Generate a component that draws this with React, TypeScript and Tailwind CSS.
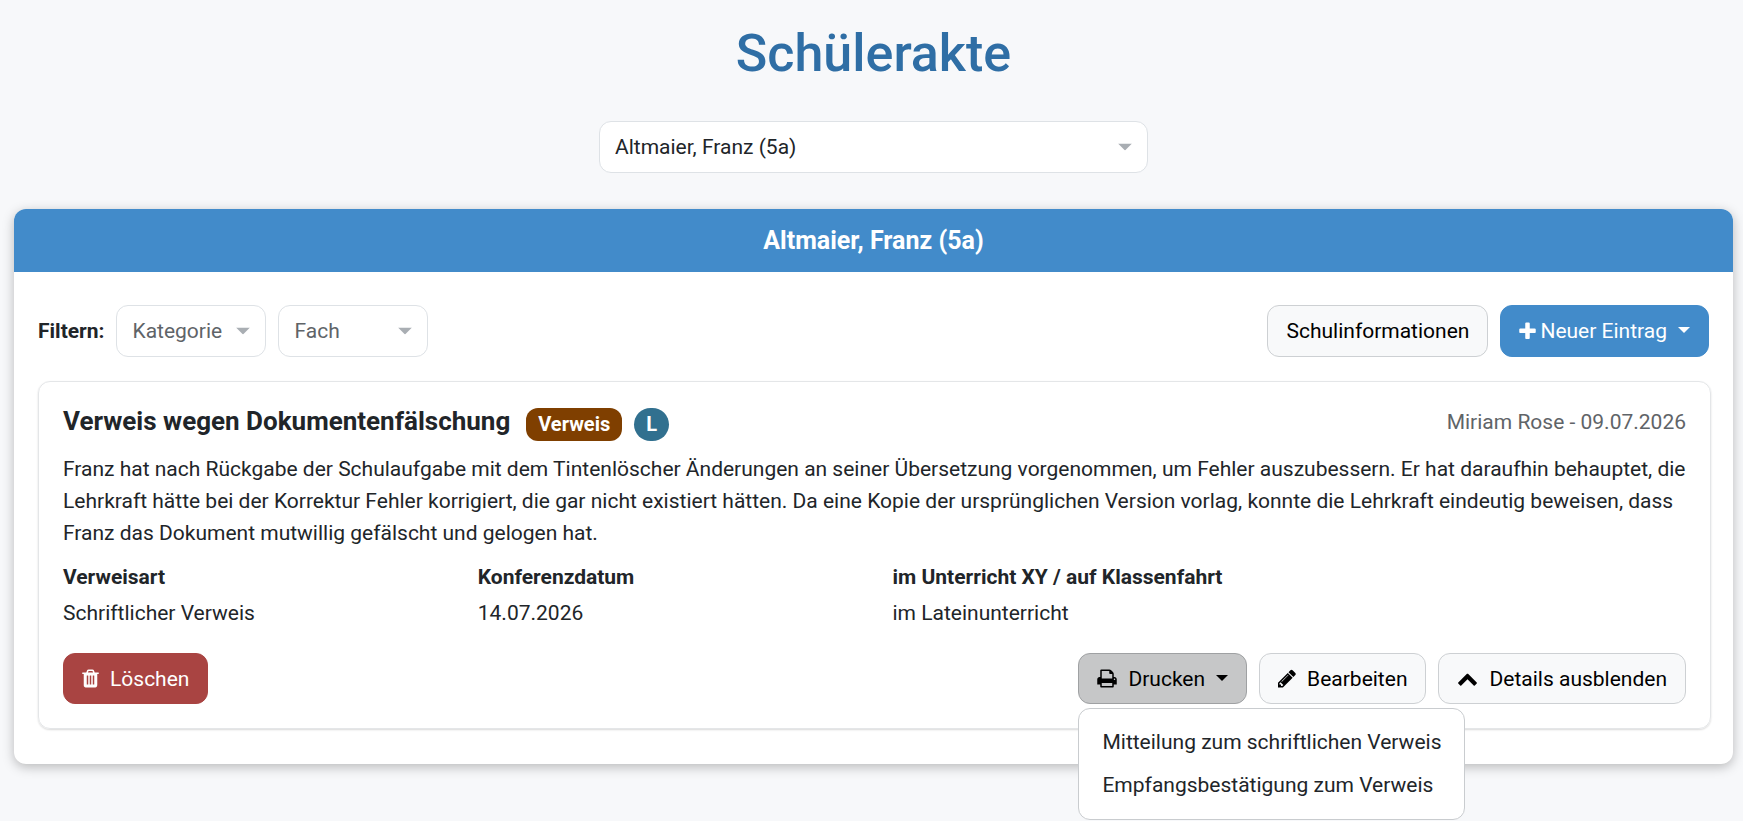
import { useState } from "react";
import type { ReactNode } from "react";
import clsx from "clsx";

const icons = {
  plus: {
    box: "192 0 1408 1792",
    size: "w-[17px]",
    path: "M1600 736v192q0 40-28 68t-68 28h-416v416q0 40-28 68t-68 28h-192q-40 0-68-28t-28-68v-416h-416q-40 0-68-28t-28-68v-192q0-40 28-68t68-28h416v-416q0-40 28-68t68-28h192q40 0 68 28t28 68v416h416q40 0 68 28t28 68z",
  },
  trash: {
    box: "192 0 1408 1792",
    size: "w-[17px]",
    path: "M704 1376v-704q0-14-9-23t-23-9h-64q-14 0-23 9t-9 23v704q0 14 9 23t23 9h64q14 0 23-9t9-23zm256 0v-704q0-14-9-23t-23-9h-64q-14 0-23 9t-9 23v704q0 14 9 23t23 9h64q14 0 23-9t9-23zm256 0v-704q0-14-9-23t-23-9h-64q-14 0-23 9t-9 23v704q0 14 9 23t23 9h64q14 0 23-9t9-23zm-544-992h448l-48-117q-7-9-17-11h-317q-10 2-17 11zm928 32v64q0 14-9 23t-23 9h-96v948q0 83-47 143.5t-113 60.5h-832q-66 0-113-58.5t-47-141.5v-952h-96q-14 0-23-9t-9-23v-64q0-14 9-23t23-9h309l70-167q15-37 54-63t79-26h320q40 0 79 26t54 63l70 167h309q14 0 23 9t9 23z",
  },
  print: {
    box: "64 0 1664 1792",
    size: "w-5",
    path: "M448 1536h896v-256h-896v256zm0-640h896v-384h-160q-40 0-68-28t-28-68v-160h-640v640zm1152 64q0-26-19-45t-45-19-45 19-19 45 19 45 45 19 45-19 19-45zm128 0v416q0 13-9.5 22.5t-22.5 9.5h-224v160q0 40-28 68t-68 28h-960q-40 0-68-28t-28-68v-160h-224q-13 0-22.5-9.5t-9.5-22.5v-416q0-79 56.5-135.5t135.5-56.5h64v-544q0-40 28-68t68-28h672q40 0 88 20t76 48l152 152q28 28 48 76t20 88v256h64q79 0 135.5 56.5t56.5 135.5z",
  },
  pencil: {
    box: "128 0 1536 1792",
    size: "w-[18px]",
    path: "M491 1536l91-91-235-235-91 91v107h128v128h107zm523-928q0-22-22-22-10 0-17 7l-542 542q-7 7-7 17 0 22 22 22 10 0 17-7l542-542q7-7 7-17zm-54-192l416 416-832 832h-416v-416zm683 96q0 53-37 90l-166 166-416-416 166-165q36-38 90-38 53 0 91 38l235 234q37 39 37 91z",
  },
  chevronUp: {
    box: "0 0 1792 1792",
    size: "w-[21px]",
    path: "M1683 1331l-166 165q-19 19-45 19t-45-19l-531-531-531 531q-19 19-45 19t-45-19l-166-165q-19-19-19-45.5t19-45.5l742-741q19-19 45-19t45 19l742 741q19 19 19 45.5t-19 45.5z",
  },
};

function Icon({ name }: { name: keyof typeof icons }) {
  const { box, size, path } = icons[name];
  return (
    <svg viewBox={box} className={clsx("h-[21px] shrink-0 fill-current", size)} aria-hidden="true">
      <path d={path} />
    </svg>
  );
}

function Caret({ className = "w-3 h-[6px] mb-[2px]" }: { className?: string }) {
  return (
    <svg viewBox="0 0 12 6" className={clsx("shrink-0 fill-current", className)} aria-hidden="true">
      <path d="M0 0h12L6 6z" />
    </svg>
  );
}

const variants = {
  light: "bg-[#f8f9fa] border-[#cdd0d3] text-black",
  active: "bg-[#c6c7c8] border-[#9fa1a3] text-black",
  primary: "bg-[#428bca] border-[#428bca] text-white",
  danger: "bg-[#a94442] border-[#a94442] text-white",
};

interface ButtonProps {
  variant?: keyof typeof variants;
  className?: string;
  onClick?: () => void;
  expanded?: boolean;
  children: ReactNode;
}

function Button({ variant = "light", className = "h-[51px]", onClick, expanded, children }: ButtonProps) {
  return (
    <button
      type="button"
      onClick={onClick}
      aria-expanded={expanded}
      className={clsx(
        "flex items-center gap-[11px] px-[18px] border rounded-xl whitespace-nowrap",
        variants[variant],
        className
      )}
    >
      {children}
    </button>
  );
}

interface SelectProps {
  label: string;
  options: string[];
  className?: string;
}

function Select({ label, options, className }: SelectProps) {
  return (
    <div className={clsx("relative", className)}>
      <select
        aria-label={label}
        className="appearance-none w-full h-[52px] pl-[15px] pr-10 bg-white border border-[#dee2e6] rounded-xl"
      >
        {options.map((option) => (
          <option key={option}>{option}</option>
        ))}
      </select>
      <Caret className="w-[14px] h-[7px] absolute right-4 top-1/2 -translate-y-1/2 text-[#a9aeb3] pointer-events-none" />
    </div>
  );
}

const details = [
  { label: "Verweisart", value: "Schriftlicher Verweis" },
  { label: "Konferenzdatum", value: "14.07.2026" },
  { label: "im Unterricht XY / auf Klassenfahrt", value: "im Lateinunterricht" },
];

const printItems = ["Mitteilung zum schriftlichen Verweis", "Empfangsbestätigung zum Verweis"];

function PrintMenu() {
  const [open, setOpen] = useState(true);

  return (
    <div className="relative">
      <Button variant={open ? "active" : "light"} expanded={open} onClick={() => setOpen(!open)}>
        <Icon name="print" />
        Drucken
        <Caret />
      </Button>
      {open && (
        <ul className="absolute left-0 top-full mt-1 py-3 bg-white border border-[#c9cccf] rounded-xl whitespace-nowrap">
          {printItems.map((item) => (
            <li key={item}>
              <a href="#" className="block px-[23px] py-[6px] leading-[31px]">
                {item}
              </a>
            </li>
          ))}
        </ul>
      )}
    </div>
  );
}

function Badge({ className, children }: { className: string; children: ReactNode }) {
  return (
    <span className={clsx("px-3 py-1 text-white text-xl leading-[25px] font-bold", className)}>{children}</span>
  );
}

function Entry() {
  return (
    <article className="mt-6 -mr-[2px] p-6 border border-[#e4e6e8] rounded-xl shadow-[0_1px_2px_rgba(0,0,0,0.15)]">
      <header className="flex items-start justify-between">
        <div className="flex items-start gap-4">
          <h3 className="text-[26px] leading-[30px] font-bold">Verweis wegen Dokumentenfälschung</h3>
          <div className="flex gap-3 pt-[2px]">
            <Badge className="bg-[#7f3f00] rounded-xl">Verweis</Badge>
            <Badge className="bg-[#31708f] rounded-full">L</Badge>
          </div>
        </div>
        <span className="text-[#5f6468]">Miriam Rose - 09.07.2026</span>
      </header>

      <p className="mt-3">
        Franz hat nach Rückgabe der Schulaufgabe mit dem Tintenlöscher Änderungen an seiner Übersetzung vorgenommen, um
        Fehler auszubessern. Er hat daraufhin behauptet, die Lehrkraft hätte bei der Korrektur Fehler korrigiert, die gar
        nicht existiert hätten. Da eine Kopie der ursprünglichen Version vorlag, konnte die Lehrkraft eindeutig beweisen,
        dass Franz das Dokument mutwillig gefälscht und gelogen hat.
      </p>

      <dl className="grid grid-cols-4 gap-x-9 mt-3">
        {details.map((detail) => (
          <div key={detail.label}>
            <dt className="font-bold">{detail.label}</dt>
            <dd className="mt-1">{detail.value}</dd>
          </div>
        ))}
      </dl>

      <footer className="flex justify-between mt-6">
        <Button variant="danger">
          <Icon name="trash" />
          Löschen
        </Button>
        <div className="flex gap-3">
          <PrintMenu />
          <Button>
            <Icon name="pencil" />
            Bearbeiten
          </Button>
          <Button>
            <Icon name="chevronUp" />
            Details ausblenden
          </Button>
        </div>
      </footer>
    </article>
  );
}

export default function App() {
  return (
    <div className="min-h-screen bg-[#f7f8fa] pl-[14px] pr-[10px] pt-[22px] font-[Roboto,sans-serif] text-[21px] leading-8 text-[#212529]">
      <h1 className="text-center text-[52px] leading-[64px] font-medium text-[#2f6ea5]">Schülerakte</h1>

      <div className="w-1/3 mx-auto px-3 mt-[35px]">
        <Select label="Schüler" options={["Altmaier, Franz (5a)"]} />
      </div>

      <main className="mt-9 bg-white rounded-xl shadow-[0_3px_12px_rgba(0,0,0,0.26)]">
        <h2 className="py-4 bg-[#428bca] rounded-t-xl text-center text-[25px] leading-[31px] font-bold text-white">
          Altmaier, Franz (5a)
        </h2>
        <div className="px-6 pt-[33px] pb-[35px]">
          <div className="flex items-center justify-between">
            <div className="flex items-center gap-3">
              <span className="font-bold">Filtern:</span>
              <Select label="Kategorie" options={["Kategorie"]} className="w-[150px] text-[#5f6468]" />
              <Select label="Fach" options={["Fach"]} className="w-[150px] text-[#5f6468]" />
            </div>
            <div className="flex gap-3">
              <Button className="h-[52px]">Schulinformationen</Button>
              <Button variant="primary" className="h-[52px]">
                <span className="flex items-center gap-1">
                  <Icon name="plus" />
                  Neuer Eintrag
                </span>
                <Caret />
              </Button>
            </div>
          </div>
          <Entry />
        </div>
      </main>
    </div>
  );
}
